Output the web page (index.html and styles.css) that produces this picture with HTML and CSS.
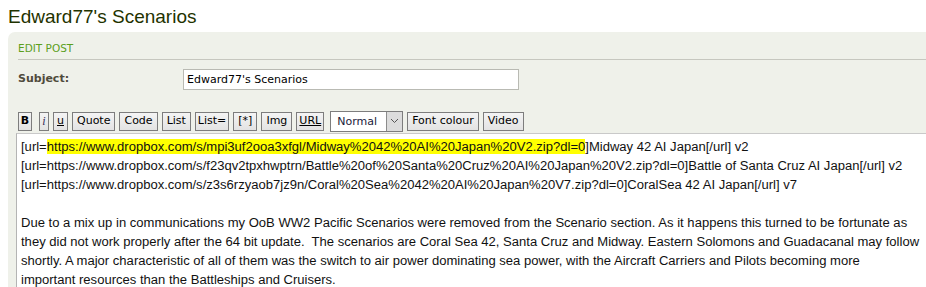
FILE: index.html
```html
<!DOCTYPE html>
<html lang="en">
<head>
    <meta charset="UTF-8">
    <title>Edward77's Scenarios</title>
    <link rel="stylesheet" href="styles.css">
</head>
<body>
    <h2 class="topic-title">Edward77's Scenarios</h2>

    <div class="panel">
        <h3 class="panel-head">EDIT POST</h3>

        <div class="field">
            <label for="subject">Subject:</label>
            <input type="text" id="subject" class="subject-input" value="Edward77's Scenarios">
        </div>

        <div class="toolbar">
            <button type="button" class="btn btn-b">B</button>
            <button type="button" class="btn btn-i">i</button>
            <button type="button" class="btn btn-u">u</button>
            <button type="button" class="btn">Quote</button>
            <button type="button" class="btn">Code</button>
            <button type="button" class="btn">List</button>
            <button type="button" class="btn btn-tight">List=</button>
            <button type="button" class="btn">[*]</button>
            <button type="button" class="btn">Img</button>
            <button type="button" class="btn btn-tight btn-url">URL</button>
            <span class="size-select">
                <span class="size-value">Normal</span>
                <span class="size-arrow">
                    <svg width="9" height="6" viewBox="0 0 9 6"><path d="M1 1 L4.5 4.5 L8 1" fill="none" stroke="#555" stroke-width="1"/></svg>
                </span>
            </span>
            <button type="button" class="btn">Font colour</button>
            <button type="button" class="btn">Video</button>
        </div>

        <div class="message-box">
            <div class="line">[url=<mark>https://www.dropbox.com/s/mpi3uf2ooa3xfgl/Midway%2042%20AI%20Japan%20V2.zip?dl=0</mark>]Midway 42 AI Japan[/url] v2</div>
            <div class="line">[url=https://www.dropbox.com/s/f23qv2tpxhwptrn/Battle%20of%20Santa%20Cruz%20AI%20Japan%20V2.zip?dl=0]Battle of Santa Cruz AI Japan[/url] v2</div>
            <div class="line">[url=https://www.dropbox.com/s/z3s6rzyaob7jz9n/Coral%20Sea%2042%20AI%20Japan%20V7.zip?dl=0]CoralSea 42 AI Japan[/url] v7</div>
            <div class="line">&nbsp;</div>
            <div class="line">Due to a mix up in communications my OoB WW2 Pacific Scenarios were removed from the Scenario section. As it happens this turned to be fortunate as</div>
            <div class="line">they did not work properly after the 64 bit update.&nbsp; The scenarios are Coral Sea 42, Santa Cruz and Midway. Eastern Solomons and Guadacanal may follow</div>
            <div class="line">shortly. A major characteristic of all of them was the switch to air power dominating sea power, with the Aircraft Carriers and Pilots becoming more</div>
            <div class="line">important resources than the Battleships and Cruisers.</div>
        </div>
    </div>
</body>
</html>
```

FILE: styles.css
```css
body {
    margin: 0;
    padding: 0 0 0 8px;
    background: #fff;
    overflow: hidden;
    font-family: "DejaVu Sans", Verdana, sans-serif;
}

.topic-title {
    margin: 0;
    padding-top: 4px;
    height: 28px;
    font-family: "Liberation Sans", Arial, sans-serif;
    font-weight: normal;
    font-size: 19px;
    line-height: 26px;
    color: #1f3300;
}

.panel {
    background: #eff1ea;
    border-top-left-radius: 7px;
    padding: 10px 0 0 10px;
    height: 300px;
    margin-right: -20px;
}

.panel-head {
    margin: 0;
    padding: 1px 0 5px;
    border-bottom: 1px solid #c6c7bf;
    font-family: "DejaVu Sans", Verdana, sans-serif;
    font-size: 10.5px;
    font-weight: normal;
    line-height: 11px;
    color: #5c9f1c;
}

.field {
    display: flex;
    align-items: flex-start;
    padding-top: 9px;
}

.field label {
    width: 165px;
    padding-top: 3px;
    font-family: "DejaVu Sans", Verdana, sans-serif;
    font-size: 11px;
    font-weight: bold;
    color: #4f4b3c;
}

.subject-input {
    box-sizing: border-box;
    width: 336px;
    height: 21px;
    margin: 0;
    padding: 0 3px;
    border: 1px solid #b9bab3;
    background: #fff;
    font-family: "DejaVu Sans", Verdana, sans-serif;
    font-size: 11px;
    color: #000;
}

.toolbar {
    display: flex;
    align-items: center;
    gap: 4px;
    margin-top: 21px;
    height: 20px;
}

.btn {
    box-sizing: border-box;
    height: 19px;
    margin: 0;
    padding: 0 4px;
    border: 1px solid #7d7d7d;
    background: linear-gradient(#f4f4f4, #e3e3e3);
    font-family: "DejaVu Sans", Verdana, sans-serif;
    font-size: 11px;
    line-height: 16px;
    color: #000;
}

.btn-tight {
    padding: 0 2px;
}

.btn-b {
    width: 14px;
    padding: 0;
    font-weight: bold;
    margin-right: 3px;
}

.btn-i {
    width: 10px;
    padding: 0;
    font-style: italic;
    font-family: "Liberation Serif", serif;
    font-size: 12px;
    color: #332b55;
}

.btn-u {
    width: 15px;
    padding: 0;
    text-decoration: underline;
}

.btn-url {
    text-decoration: underline;
}

.size-select {
    display: flex;
    box-sizing: border-box;
    height: 21px;
    width: 73px;
    margin-left: 2px;
    border: 1px solid #7d7d7d;
    background: #fff;
    font-size: 11px;
}

.size-value {
    flex: 1;
    padding: 3px 0 0 6px;
    color: #1a1a3a;
}

.size-arrow {
    display: flex;
    align-items: center;
    justify-content: center;
    width: 15px;
    border-left: 1px solid #8c8c8c;
    background: #dcdcdc;
}

.message-box {
    margin-top: 2px;
    margin-left: -2px;
    padding: 3px 0 0 4px;
    background: #fff;
    border-top: 1px solid #c9c9c9;
    border-left: 1px solid #b4b4b4;
    height: 200px;
    font-family: "Liberation Sans", Arial, sans-serif;
    font-size: 13.05px;
    line-height: 19px;
    color: #111;
    white-space: nowrap;
}

.message-box mark {
    background: #ffff00;
    color: #111;
}
```
